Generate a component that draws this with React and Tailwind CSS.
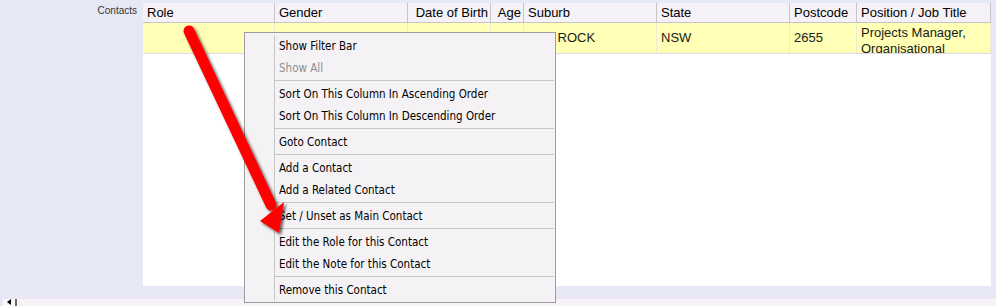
import React from "react";

const cols = [
  { w: 132, h: "Role", v: "" },
  { w: 133, h: "Gender", v: "" },
  { w: 83, h: "Date of Birth", v: "", right: true },
  { w: 33, h: "Age", v: "", right: true },
  { w: 133, h: "Suburb", v: "THE ROCK" },
  { w: 133, h: "State", v: "NSW" },
  { w: 67, h: "Postcode", v: "2655" },
  { w: 134, h: "Position / Job Title", v: "Projects Manager, Organisational", multi: true },
];

const menu = [
  { t: "Show Filter Bar" },
  { t: "Show All", dis: true },
  "sep",
  { t: "Sort On This Column In Ascending Order" },
  { t: "Sort On This Column In Descending Order" },
  "sep",
  { t: "Goto Contact" },
  "sep",
  { t: "Add a Contact" },
  { t: "Add a Related Contact" },
  "sep",
  { t: "Set / Unset as Main Contact" },
  "sep",
  { t: "Edit the Role for this Contact" },
  { t: "Edit the Note for this Contact" },
  "sep",
  { t: "Remove this Contact" },
];

export default function App() {
  return (
    <div className="relative w-[996px] h-[306px] overflow-hidden bg-[#e6e9f5] font-['Liberation_Sans',Arial,sans-serif] text-black">
      <div className="flex pt-[3px]">
        <div className="w-[143px] shrink-0 pr-[6px] pt-[2px] text-right text-[10px] leading-[12px] text-[#333]">
          Contacts
        </div>
        <div className="w-[848px] h-[283px] bg-white flex flex-col">
          <div className="flex h-[20px] bg-[#f5f2f7] border-b border-[#c6c3cc]">
            {cols.map((c, i) => (
              <div
                key={i}
                style={{ width: c.w }}
                className={`shrink-0 border-r border-[#c6c3cc] px-[4px] text-[13px] leading-[19px] whitespace-nowrap overflow-hidden ${c.right ? "text-right pr-[2px]" : ""}`}
              >
                {c.h}
              </div>
            ))}
          </div>
          <div className="flex h-[31px] bg-[#ffffb5] border-b border-[#dcdce8]">
            {cols.map((c, i) => (
              <div
                key={i}
                style={{ width: c.w }}
                className={`shrink-0 border-r border-[#ecebd2] px-[4px] text-[13px] overflow-hidden text-[#1a1a1a] ${c.multi ? "leading-[16px] pt-[2px]" : "leading-[30px]"}`}
              >
                {c.v}
              </div>
            ))}
          </div>
        </div>
      </div>

      <div className="mt-[12px] ml-[3px] h-[8px] flex bg-[#f7f2f7] border-t border-[#efe6ee]">
        <div className="w-[14px] h-full bg-[#fbf9fb] border-r-2 border-[#6b6b6b] flex items-end justify-center">
          <div className="w-0 h-0 border-y-[3px] border-y-transparent border-r-[4px] border-r-black mb-[1px]" />
        </div>
      </div>

      {/* context menu */}
      <div className="absolute left-[244px] top-[32px] w-[312px] border border-[#9c9c9c] bg-[#f5f2f5] pt-[2px] pb-[1px] font-['DejaVu_Sans_Condensed','DejaVu_Sans',sans-serif] text-[11.5px]">
        <div className="flex">
          <div className="w-[30px] shrink-0 border-r border-[#c6c6c6]" />
          <div className="flex-1 pr-[1px]">
            {menu.map((m, i) =>
              m === "sep" ? (
                <div key={i} className="h-[4px] pt-[1px]">
                  <div className="h-px bg-[#c6c6c6]" />
                </div>
              ) : (
                <div
                  key={i}
                  className={`h-[22px] leading-[22px] pl-[4px] whitespace-nowrap ${m.dis ? "text-[#8d8d8d]" : "text-black"}`}
                >
                  {m.t}
                </div>
              )
            )}
          </div>
        </div>
      </div>

      {/* red arrow annotation */}
      <svg className="absolute left-0 top-0 pointer-events-none" width="996" height="306" viewBox="0 0 996 306">
        <defs>
          <filter id="sh" x="-20%" y="-20%" width="140%" height="140%">
            <feDropShadow dx="2" dy="2" stdDeviation="1.5" floodColor="#000" floodOpacity="0.65" />
          </filter>
        </defs>
        <g filter="url(#sh)">
          <line x1="189" y1="31" x2="271" y2="205" stroke="#ff0000" strokeWidth="11" strokeLinecap="round" />
          <polygon points="279,233 260,221 284,202" fill="#ff0000" />
        </g>
      </svg>
    </div>
  );
}
